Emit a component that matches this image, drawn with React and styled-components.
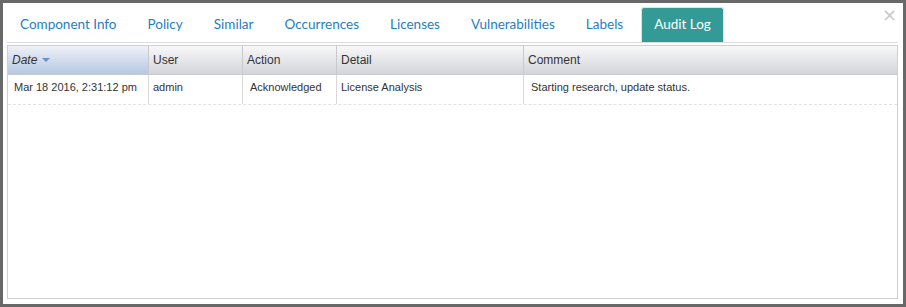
import React from "react";
import styled, { createGlobalStyle } from "styled-components";

const GlobalStyle = createGlobalStyle`
  html, body {
    margin: 0;
    padding: 0;
    background: #686868;
  }
  body {
    font-family: "Liberation Sans", Arial, sans-serif;
  }
  *, *::before, *::after {
    box-sizing: border-box;
  }
`;

const tabs = [
  "Component Info",
  "Policy",
  "Similar",
  "Occurrences",
  "Licenses",
  "Vulnerabilities",
  "Labels",
  "Audit Log",
];

const columns = [
  { key: "date", label: "Date", width: 141, pad: 6, sorted: true },
  { key: "user", label: "User", width: 94, pad: 4 },
  { key: "action", label: "Action", width: 94, pad: 7 },
  { key: "detail", label: "Detail", width: 187, pad: 4 },
  { key: "comment", label: "Comment", pad: 7 },
];

const rows = [
  {
    date: "Mar 18 2016, 2:31:12 pm",
    user: "admin",
    action: "Acknowledged",
    detail: "License Analysis",
    comment: "Starting research, update status.",
  },
];

const App = () => {
  return (
    <>
      <GlobalStyle />
      <Modal>
        <CloseButton>×</CloseButton>
        <TabBar>
          {tabs.map((t) => (
            <Tab key={t} $active={t === "Audit Log"}>
              {t}
            </Tab>
          ))}
        </TabBar>
        <Grid>
          <HeaderRow>
            {columns.map((c) => (
              <HeaderCell key={c.key} $width={c.width} $sorted={c.sorted}>
                {c.label}
                {c.sorted && <SortArrow />}
              </HeaderCell>
            ))}
          </HeaderRow>
          {rows.map((r, i) => (
            <Row key={i}>
              {columns.map((c) => (
                <Cell key={c.key} $width={c.width} $pad={c.pad}>
                  {r[c.key]}
                </Cell>
              ))}
            </Row>
          ))}
        </Grid>
      </Modal>
    </>
  );
};

export default App;

const Modal = styled.div`
  position: relative;
  margin: 3px;
  height: 301px;
  background: #fff;
  padding: 0 5px 5px 4px;
  display: flex;
  flex-direction: column;
`;

const CloseButton = styled.span`
  position: absolute;
  top: 2px;
  right: 6px;
  font-size: 18px;
  color: #c8c8c8;
  line-height: 20px;
  font-family: "DejaVu Sans", sans-serif;
`;

const TabBar = styled.div`
  display: flex;
  align-items: flex-end;
  height: 40px;
  padding-top: 4px;
  border-bottom: 1px solid #dcdcdc;
`;

const Tab = styled.div`
  font-family: Lato, sans-serif;
  font-size: 13.5px;
  height: 35px;
  line-height: 32px;
  padding: 0 12px;
  margin-right: 5px;
  border-radius: 3px 3px 0 0;
  color: ${(p) => (p.$active ? "#fff" : "#1f7ec4")};
  background: ${(p) => (p.$active ? "#339a96" : "transparent")};
  border: 1px solid ${(p) => (p.$active ? "#d6e7e6" : "transparent")};
  border-bottom: none;
  white-space: nowrap;
`;

const Grid = styled.div`
  flex: 1;
  margin-top: 2px;
  border: 1px solid #cfcfcf;
  font-size: 11px;
  color: #333;
`;

const HeaderRow = styled.div`
  display: flex;
  height: 29px;
  border-bottom: 1px solid #c9cace;
  background: linear-gradient(#f8f8fa, #d4d5da);
`;

const HeaderCell = styled.div`
  ${(p) => (p.$width ? `width: ${p.$width}px;` : "flex: 1;")}
  flex-shrink: 0;
  display: flex;
  align-items: center;
  padding-left: 4px;
  font-size: 12px;
  font-style: ${(p) => (p.$sorted ? "italic" : "normal")};
  border-right: 1px solid #c8c9cd;
  background: ${(p) =>
    p.$sorted ? "linear-gradient(#eef1f7, #b6c8e3)" : "transparent"};
  &:last-child {
    border-right: none;
  }
`;

const SortArrow = styled.span`
  margin-left: 5px;
  width: 0;
  height: 0;
  border-left: 4px solid transparent;
  border-right: 4px solid transparent;
  border-top: 4px solid #6c8fc4;
`;

const Row = styled.div`
  display: flex;
  height: 30px;
  border-bottom: 1px dashed #e2e2e2;
`;

const Cell = styled.div`
  ${(p) => (p.$width ? `width: ${p.$width}px;` : "flex: 1;")}
  flex-shrink: 0;
  padding: 6px 0 0 ${(p) => p.$pad}px;
  line-height: 13px;
  border-right: 1px solid #d8d8d8;
  white-space: nowrap;
  &:last-child {
    border-right: none;
  }
`;
